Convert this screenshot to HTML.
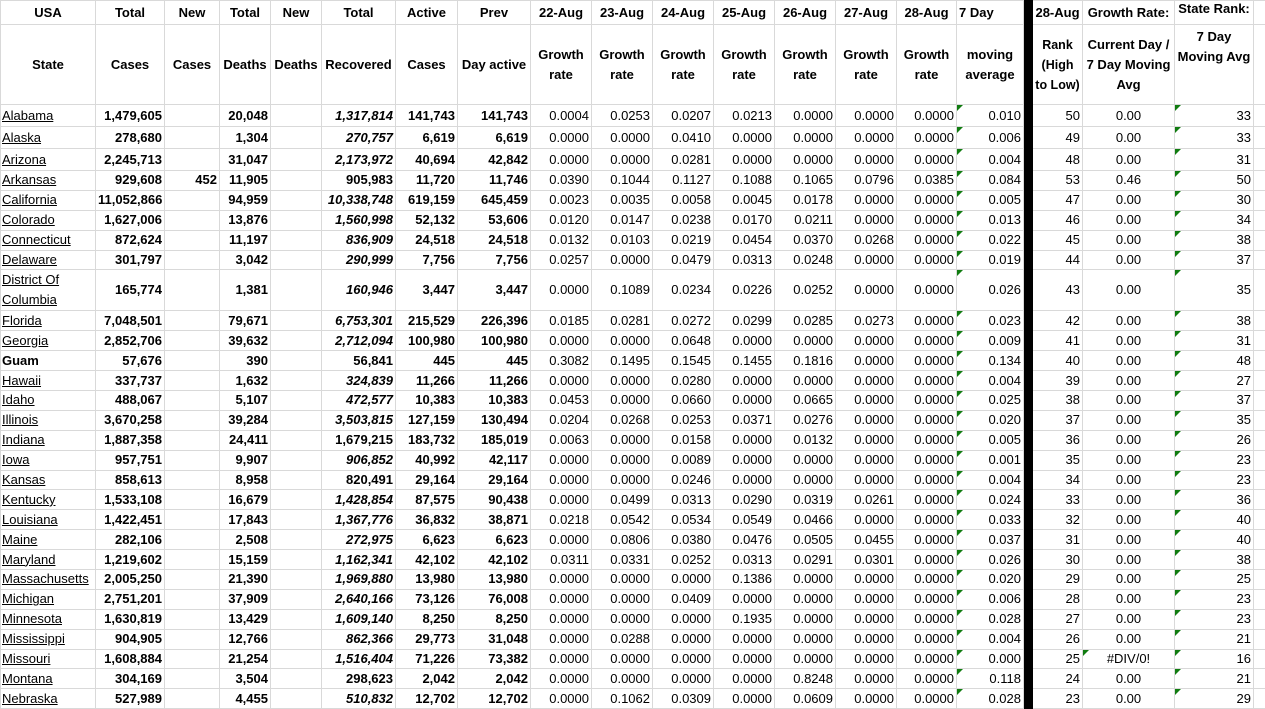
<!DOCTYPE html>
<html><head><meta charset="utf-8"><style>
body{margin:0;background:#fff;width:1265px;height:709px;overflow:hidden;font-family:"Liberation Sans",sans-serif;font-size:13px;color:#000}
table{border-collapse:collapse;table-layout:fixed;width:1265px}
td{border:1px solid #d9d9d9;padding:0 2px;white-space:nowrap;overflow:hidden;text-align:right;position:relative;line-height:16px}
tr.h1{height:24px}
tr.h1 td{font-weight:bold;text-align:center;vertical-align:middle}
tr.h2{height:80px}
tr.h2 td{font-weight:bold;text-align:center;vertical-align:middle;line-height:20px;white-space:normal}
tr.d{height:19.9px}
tr.t{height:22px}
td.s{text-align:left;text-decoration:underline;padding-left:1px}
td.sb{text-align:left;font-weight:bold;padding-left:1px}
td.b{font-weight:bold}
td.i{font-weight:bold;font-style:italic}
td.c{text-align:center}
td.k{background:#000;border-color:#000;padding:0}
td.g::before{content:"";position:absolute;left:0;top:0;border-top:6px solid #107c10;border-right:6px solid transparent}
</style></head><body>
<table>
<colgroup><col style="width:95px"><col style="width:69px"><col style="width:55px"><col style="width:51px"><col style="width:51px"><col style="width:74px"><col style="width:62px"><col style="width:73px"><col style="width:61px"><col style="width:61px"><col style="width:61px"><col style="width:61px"><col style="width:61px"><col style="width:61px"><col style="width:60px"><col style="width:67px"><col style="width:9px"><col style="width:50px"><col style="width:92px"><col style="width:79px"><col style="width:12px"></colgroup>
<tr class="h1"><td>USA</td><td>Total</td><td>New</td><td>Total</td><td>New</td><td>Total</td><td>Active</td><td>Prev</td><td>22-Aug</td><td>23-Aug</td><td>24-Aug</td><td>25-Aug</td><td>26-Aug</td><td>27-Aug</td><td>28-Aug</td><td style="text-align:left">7 Day</td><td class="k"></td><td>28-Aug</td><td>Growth Rate:</td><td style="vertical-align:top">State Rank:</td><td></td></tr>
<tr class="h2"><td>State</td><td>Cases</td><td>Cases</td><td>Deaths</td><td>Deaths</td><td>Recovered</td><td>Cases</td><td>Day active</td><td>Growth rate</td><td>Growth rate</td><td>Growth rate</td><td>Growth rate</td><td>Growth rate</td><td>Growth rate</td><td>Growth rate</td><td>moving average</td><td class="k"></td><td style="padding:0;font-size:12.5px">Rank<br>(High<br>to Low)</td><td>Current Day / 7 Day Moving Avg</td><td style="vertical-align:top;padding-top:2px">7 Day Moving Avg</td><td></td></tr>
<tr class="t"><td class="s">Alabama</td><td class="b">1,479,605</td><td></td><td class="b">20,048</td><td></td><td class="i">1,317,814</td><td class="b">141,743</td><td class="b">141,743</td><td>0.0004</td><td>0.0253</td><td>0.0207</td><td>0.0213</td><td>0.0000</td><td>0.0000</td><td>0.0000</td><td class="g">0.010</td><td class="k"></td><td>50</td><td class="c">0.00</td><td class="g">33</td><td></td></tr>
<tr class="t"><td class="s">Alaska</td><td class="b">278,680</td><td></td><td class="b">1,304</td><td></td><td class="i">270,757</td><td class="b">6,619</td><td class="b">6,619</td><td>0.0000</td><td>0.0000</td><td>0.0410</td><td>0.0000</td><td>0.0000</td><td>0.0000</td><td>0.0000</td><td class="g">0.006</td><td class="k"></td><td>49</td><td class="c">0.00</td><td class="g">33</td><td></td></tr>
<tr class="t"><td class="s">Arizona</td><td class="b">2,245,713</td><td></td><td class="b">31,047</td><td></td><td class="i">2,173,972</td><td class="b">40,694</td><td class="b">42,842</td><td>0.0000</td><td>0.0000</td><td>0.0281</td><td>0.0000</td><td>0.0000</td><td>0.0000</td><td>0.0000</td><td class="g">0.004</td><td class="k"></td><td>48</td><td class="c">0.00</td><td class="g">31</td><td></td></tr>
<tr class="d"><td class="s">Arkansas</td><td class="b">929,608</td><td class="b">452</td><td class="b">11,905</td><td></td><td class="b">905,983</td><td class="b">11,720</td><td class="b">11,746</td><td>0.0390</td><td>0.1044</td><td>0.1127</td><td>0.1088</td><td>0.1065</td><td>0.0796</td><td>0.0385</td><td class="g">0.084</td><td class="k"></td><td>53</td><td class="c">0.46</td><td class="g">50</td><td></td></tr>
<tr class="d"><td class="s">California</td><td class="b">11,052,866</td><td></td><td class="b">94,959</td><td></td><td class="i">10,338,748</td><td class="b">619,159</td><td class="b">645,459</td><td>0.0023</td><td>0.0035</td><td>0.0058</td><td>0.0045</td><td>0.0178</td><td>0.0000</td><td>0.0000</td><td class="g">0.005</td><td class="k"></td><td>47</td><td class="c">0.00</td><td class="g">30</td><td></td></tr>
<tr class="d"><td class="s">Colorado</td><td class="b">1,627,006</td><td></td><td class="b">13,876</td><td></td><td class="i">1,560,998</td><td class="b">52,132</td><td class="b">53,606</td><td>0.0120</td><td>0.0147</td><td>0.0238</td><td>0.0170</td><td>0.0211</td><td>0.0000</td><td>0.0000</td><td class="g">0.013</td><td class="k"></td><td>46</td><td class="c">0.00</td><td class="g">34</td><td></td></tr>
<tr class="d"><td class="s">Connecticut</td><td class="b">872,624</td><td></td><td class="b">11,197</td><td></td><td class="i">836,909</td><td class="b">24,518</td><td class="b">24,518</td><td>0.0132</td><td>0.0103</td><td>0.0219</td><td>0.0454</td><td>0.0370</td><td>0.0268</td><td>0.0000</td><td class="g">0.022</td><td class="k"></td><td>45</td><td class="c">0.00</td><td class="g">38</td><td></td></tr>
<tr class="d"><td class="s">Delaware</td><td class="b">301,797</td><td></td><td class="b">3,042</td><td></td><td class="i">290,999</td><td class="b">7,756</td><td class="b">7,756</td><td>0.0257</td><td>0.0000</td><td>0.0479</td><td>0.0313</td><td>0.0248</td><td>0.0000</td><td>0.0000</td><td class="g">0.019</td><td class="k"></td><td>44</td><td class="c">0.00</td><td class="g">37</td><td></td></tr>
<tr style="height:41px"><td class="s" style="white-space:normal;line-height:20px">District Of Columbia</td><td class="b">165,774</td><td></td><td class="b">1,381</td><td></td><td class="i">160,946</td><td class="b">3,447</td><td class="b">3,447</td><td>0.0000</td><td>0.1089</td><td>0.0234</td><td>0.0226</td><td>0.0252</td><td>0.0000</td><td>0.0000</td><td class="g">0.026</td><td class="k"></td><td>43</td><td class="c">0.00</td><td class="g">35</td><td></td></tr>
<tr class="d"><td class="s">Florida</td><td class="b">7,048,501</td><td></td><td class="b">79,671</td><td></td><td class="i">6,753,301</td><td class="b">215,529</td><td class="b">226,396</td><td>0.0185</td><td>0.0281</td><td>0.0272</td><td>0.0299</td><td>0.0285</td><td>0.0273</td><td>0.0000</td><td class="g">0.023</td><td class="k"></td><td>42</td><td class="c">0.00</td><td class="g">38</td><td></td></tr>
<tr class="d"><td class="s">Georgia</td><td class="b">2,852,706</td><td></td><td class="b">39,632</td><td></td><td class="i">2,712,094</td><td class="b">100,980</td><td class="b">100,980</td><td>0.0000</td><td>0.0000</td><td>0.0648</td><td>0.0000</td><td>0.0000</td><td>0.0000</td><td>0.0000</td><td class="g">0.009</td><td class="k"></td><td>41</td><td class="c">0.00</td><td class="g">31</td><td></td></tr>
<tr class="d"><td class="sb">Guam</td><td class="b">57,676</td><td></td><td class="b">390</td><td></td><td class="b">56,841</td><td class="b">445</td><td class="b">445</td><td>0.3082</td><td>0.1495</td><td>0.1545</td><td>0.1455</td><td>0.1816</td><td>0.0000</td><td>0.0000</td><td class="g">0.134</td><td class="k"></td><td>40</td><td class="c">0.00</td><td class="g">48</td><td></td></tr>
<tr class="d"><td class="s">Hawaii</td><td class="b">337,737</td><td></td><td class="b">1,632</td><td></td><td class="i">324,839</td><td class="b">11,266</td><td class="b">11,266</td><td>0.0000</td><td>0.0000</td><td>0.0280</td><td>0.0000</td><td>0.0000</td><td>0.0000</td><td>0.0000</td><td class="g">0.004</td><td class="k"></td><td>39</td><td class="c">0.00</td><td class="g">27</td><td></td></tr>
<tr class="d"><td class="s">Idaho</td><td class="b">488,067</td><td></td><td class="b">5,107</td><td></td><td class="i">472,577</td><td class="b">10,383</td><td class="b">10,383</td><td>0.0453</td><td>0.0000</td><td>0.0660</td><td>0.0000</td><td>0.0665</td><td>0.0000</td><td>0.0000</td><td class="g">0.025</td><td class="k"></td><td>38</td><td class="c">0.00</td><td class="g">37</td><td></td></tr>
<tr class="d"><td class="s">Illinois</td><td class="b">3,670,258</td><td></td><td class="b">39,284</td><td></td><td class="i">3,503,815</td><td class="b">127,159</td><td class="b">130,494</td><td>0.0204</td><td>0.0268</td><td>0.0253</td><td>0.0371</td><td>0.0276</td><td>0.0000</td><td>0.0000</td><td class="g">0.020</td><td class="k"></td><td>37</td><td class="c">0.00</td><td class="g">35</td><td></td></tr>
<tr class="d"><td class="s">Indiana</td><td class="b">1,887,358</td><td></td><td class="b">24,411</td><td></td><td class="b">1,679,215</td><td class="b">183,732</td><td class="b">185,019</td><td>0.0063</td><td>0.0000</td><td>0.0158</td><td>0.0000</td><td>0.0132</td><td>0.0000</td><td>0.0000</td><td class="g">0.005</td><td class="k"></td><td>36</td><td class="c">0.00</td><td class="g">26</td><td></td></tr>
<tr class="d"><td class="s">Iowa</td><td class="b">957,751</td><td></td><td class="b">9,907</td><td></td><td class="i">906,852</td><td class="b">40,992</td><td class="b">42,117</td><td>0.0000</td><td>0.0000</td><td>0.0089</td><td>0.0000</td><td>0.0000</td><td>0.0000</td><td>0.0000</td><td class="g">0.001</td><td class="k"></td><td>35</td><td class="c">0.00</td><td class="g">23</td><td></td></tr>
<tr class="d"><td class="s">Kansas</td><td class="b">858,613</td><td></td><td class="b">8,958</td><td></td><td class="b">820,491</td><td class="b">29,164</td><td class="b">29,164</td><td>0.0000</td><td>0.0000</td><td>0.0246</td><td>0.0000</td><td>0.0000</td><td>0.0000</td><td>0.0000</td><td class="g">0.004</td><td class="k"></td><td>34</td><td class="c">0.00</td><td class="g">23</td><td></td></tr>
<tr class="d"><td class="s">Kentucky</td><td class="b">1,533,108</td><td></td><td class="b">16,679</td><td></td><td class="i">1,428,854</td><td class="b">87,575</td><td class="b">90,438</td><td>0.0000</td><td>0.0499</td><td>0.0313</td><td>0.0290</td><td>0.0319</td><td>0.0261</td><td>0.0000</td><td class="g">0.024</td><td class="k"></td><td>33</td><td class="c">0.00</td><td class="g">36</td><td></td></tr>
<tr class="d"><td class="s">Louisiana</td><td class="b">1,422,451</td><td></td><td class="b">17,843</td><td></td><td class="i">1,367,776</td><td class="b">36,832</td><td class="b">38,871</td><td>0.0218</td><td>0.0542</td><td>0.0534</td><td>0.0549</td><td>0.0466</td><td>0.0000</td><td>0.0000</td><td class="g">0.033</td><td class="k"></td><td>32</td><td class="c">0.00</td><td class="g">40</td><td></td></tr>
<tr class="d"><td class="s">Maine</td><td class="b">282,106</td><td></td><td class="b">2,508</td><td></td><td class="i">272,975</td><td class="b">6,623</td><td class="b">6,623</td><td>0.0000</td><td>0.0806</td><td>0.0380</td><td>0.0476</td><td>0.0505</td><td>0.0455</td><td>0.0000</td><td class="g">0.037</td><td class="k"></td><td>31</td><td class="c">0.00</td><td class="g">40</td><td></td></tr>
<tr class="d"><td class="s">Maryland</td><td class="b">1,219,602</td><td></td><td class="b">15,159</td><td></td><td class="i">1,162,341</td><td class="b">42,102</td><td class="b">42,102</td><td>0.0311</td><td>0.0331</td><td>0.0252</td><td>0.0313</td><td>0.0291</td><td>0.0301</td><td>0.0000</td><td class="g">0.026</td><td class="k"></td><td>30</td><td class="c">0.00</td><td class="g">38</td><td></td></tr>
<tr class="d"><td class="s">Massachusetts</td><td class="b">2,005,250</td><td></td><td class="b">21,390</td><td></td><td class="i">1,969,880</td><td class="b">13,980</td><td class="b">13,980</td><td>0.0000</td><td>0.0000</td><td>0.0000</td><td>0.1386</td><td>0.0000</td><td>0.0000</td><td>0.0000</td><td class="g">0.020</td><td class="k"></td><td>29</td><td class="c">0.00</td><td class="g">25</td><td></td></tr>
<tr class="d"><td class="s">Michigan</td><td class="b">2,751,201</td><td></td><td class="b">37,909</td><td></td><td class="i">2,640,166</td><td class="b">73,126</td><td class="b">76,008</td><td>0.0000</td><td>0.0000</td><td>0.0409</td><td>0.0000</td><td>0.0000</td><td>0.0000</td><td>0.0000</td><td class="g">0.006</td><td class="k"></td><td>28</td><td class="c">0.00</td><td class="g">23</td><td></td></tr>
<tr class="d"><td class="s">Minnesota</td><td class="b">1,630,819</td><td></td><td class="b">13,429</td><td></td><td class="i">1,609,140</td><td class="b">8,250</td><td class="b">8,250</td><td>0.0000</td><td>0.0000</td><td>0.0000</td><td>0.1935</td><td>0.0000</td><td>0.0000</td><td>0.0000</td><td class="g">0.028</td><td class="k"></td><td>27</td><td class="c">0.00</td><td class="g">23</td><td></td></tr>
<tr class="d"><td class="s">Mississippi</td><td class="b">904,905</td><td></td><td class="b">12,766</td><td></td><td class="i">862,366</td><td class="b">29,773</td><td class="b">31,048</td><td>0.0000</td><td>0.0288</td><td>0.0000</td><td>0.0000</td><td>0.0000</td><td>0.0000</td><td>0.0000</td><td class="g">0.004</td><td class="k"></td><td>26</td><td class="c">0.00</td><td class="g">21</td><td></td></tr>
<tr class="d"><td class="s">Missouri</td><td class="b">1,608,884</td><td></td><td class="b">21,254</td><td></td><td class="i">1,516,404</td><td class="b">71,226</td><td class="b">73,382</td><td>0.0000</td><td>0.0000</td><td>0.0000</td><td>0.0000</td><td>0.0000</td><td>0.0000</td><td>0.0000</td><td class="g">0.000</td><td class="k"></td><td>25</td><td class="c g">#DIV/0!</td><td class="g">16</td><td></td></tr>
<tr class="d"><td class="s">Montana</td><td class="b">304,169</td><td></td><td class="b">3,504</td><td></td><td class="b">298,623</td><td class="b">2,042</td><td class="b">2,042</td><td>0.0000</td><td>0.0000</td><td>0.0000</td><td>0.0000</td><td>0.8248</td><td>0.0000</td><td>0.0000</td><td class="g">0.118</td><td class="k"></td><td>24</td><td class="c">0.00</td><td class="g">21</td><td></td></tr>
<tr class="d"><td class="s">Nebraska</td><td class="b">527,989</td><td></td><td class="b">4,455</td><td></td><td class="i">510,832</td><td class="b">12,702</td><td class="b">12,702</td><td>0.0000</td><td>0.1062</td><td>0.0309</td><td>0.0000</td><td>0.0609</td><td>0.0000</td><td>0.0000</td><td class="g">0.028</td><td class="k"></td><td>23</td><td class="c">0.00</td><td class="g">29</td><td></td></tr>
</table>
</body></html>
